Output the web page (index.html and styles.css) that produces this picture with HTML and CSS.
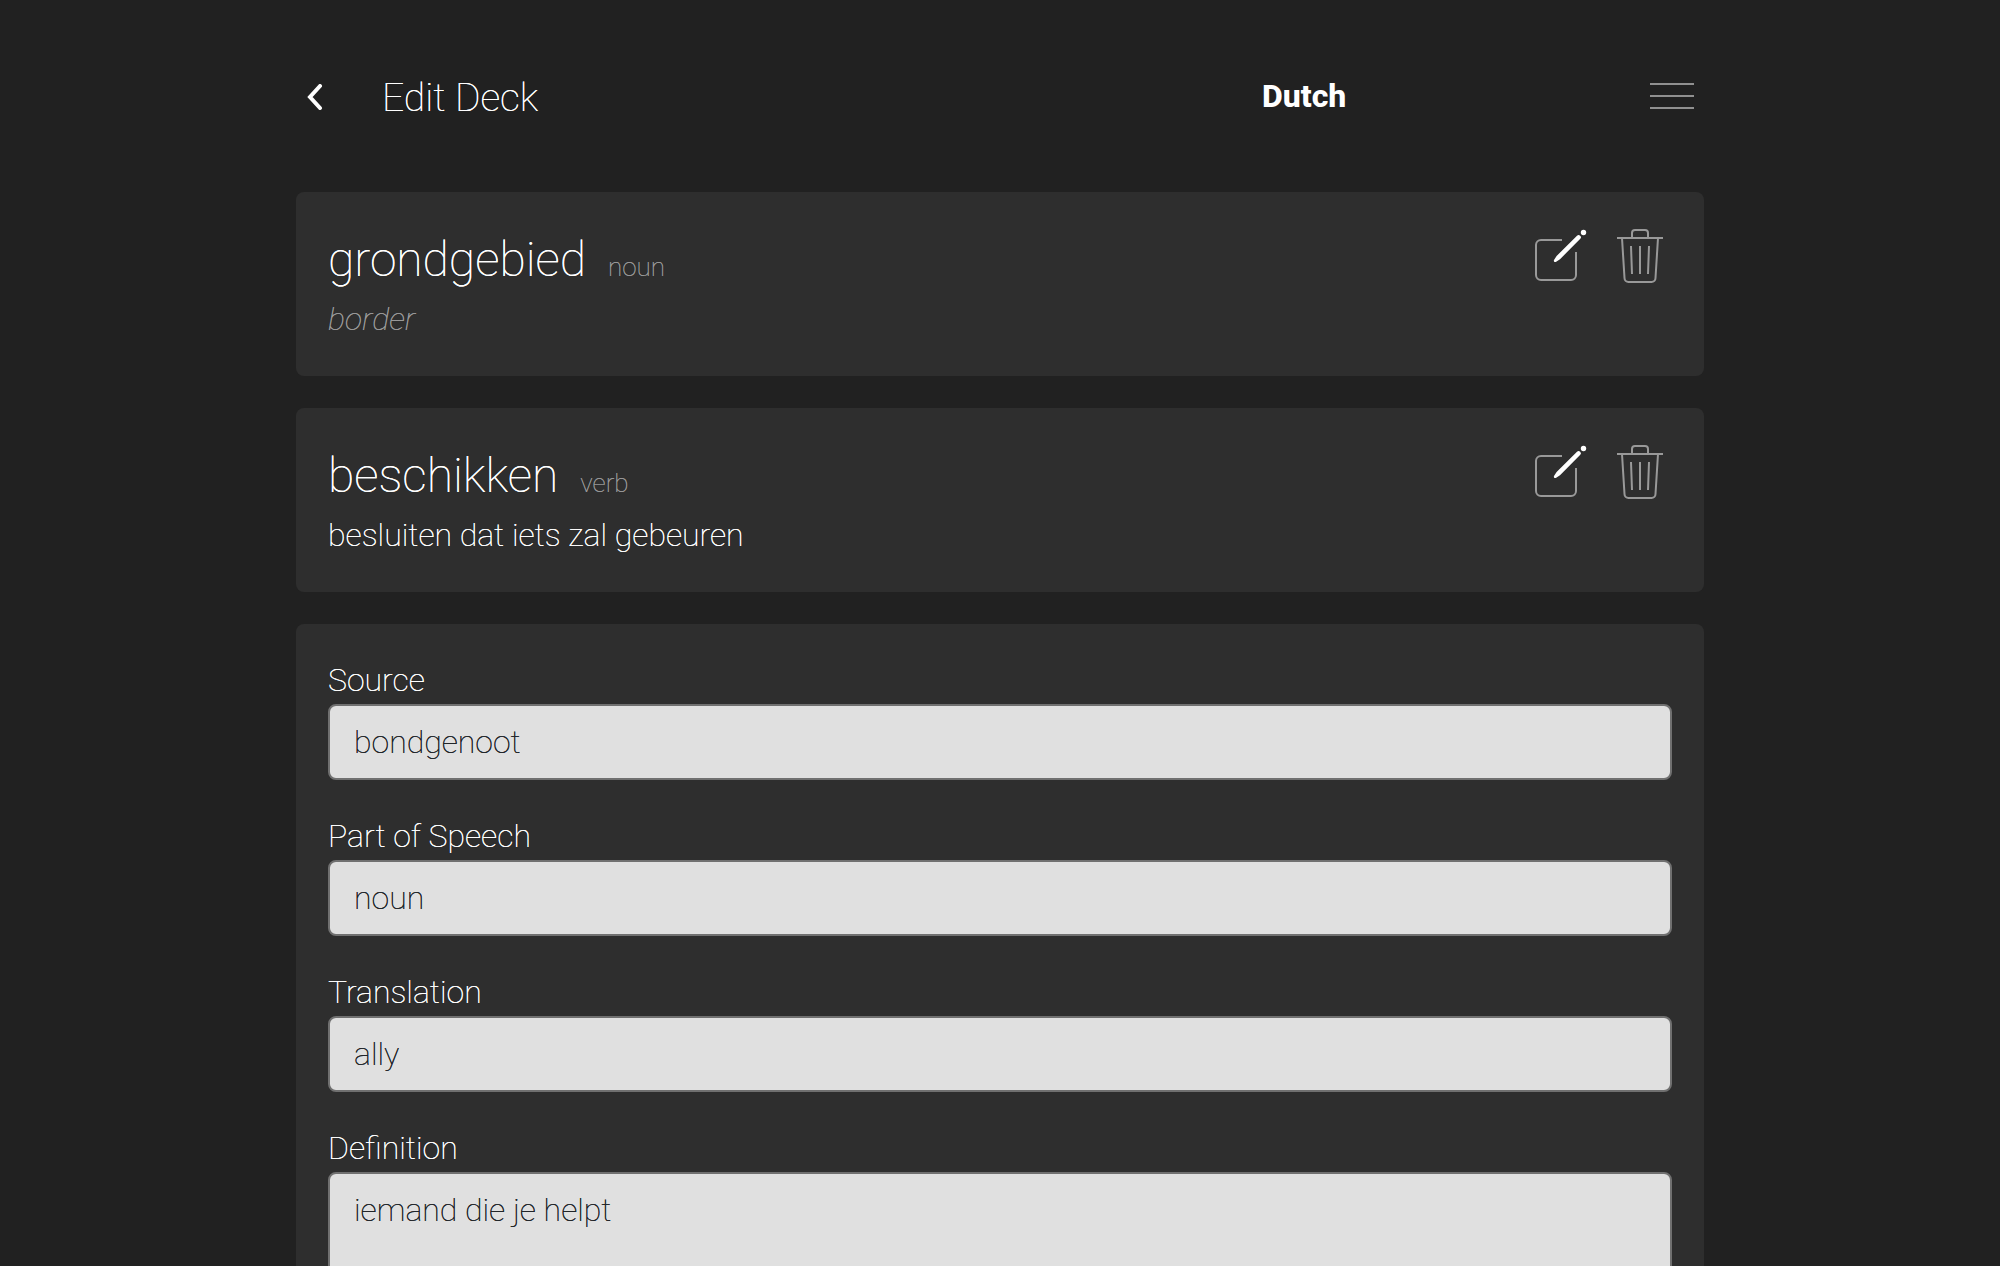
FILE: index.html
```html
<!DOCTYPE html>
<html lang="en">
<head>
<meta charset="utf-8">
<meta name="viewport" content="width=device-width, initial-scale=1">
<title>Edit Deck</title>
<link rel="stylesheet" href="styles.css">
</head>
<body>
<svg class="sprite" aria-hidden="true">
  <symbol id="icon-edit" viewBox="0 0 56 58">
    <path class="icon-line" d="M30 14H9a5 5 0 0 0-5 5v30a5 5 0 0 0 5 5h30a5 5 0 0 0 5-5V26"/>
    <path class="icon-solid" d="M45 9.800a2.200 2.200 0 0 1 3.300 3L28 33.200 24.200 35.800c-1.600.8-2.800-.4-2.200-1.800l2.600-4Z"/>
    <circle class="icon-solid" cx="51.500" cy="6.500" r="2.700"/>
  </symbol>
  <symbol id="icon-trash" viewBox="0 0 56 58">
    <path class="icon-line" d="M5 12h46M20 12V7a3 3 0 0 1 3-3h10a3 3 0 0 1 3 3v5M10 12l2.500 40a4 4 0 0 0 4 4h23a4 4 0 0 0 4-4L46 12M19 20l1 28M28 20v28M37 20l-1 28"/>
  </symbol>
</svg>
<div class="page">
  <header class="topbar">
    <a class="back" href="#" aria-label="Back">
      <svg viewBox="0 0 16 26" aria-hidden="true"><path d="M13 2 3 13l10 11"/></svg>
    </a>
    <h1 class="title">Edit Deck</h1>
    <strong class="deck">Dutch</strong>
    <button class="menu" type="button" aria-label="Menu"><span></span><span></span><span></span></button>
  </header>
  <main class="cards">
    <article class="card entry">
      <div class="entry-text">
        <h2 class="word">grondgebied <small class="speech">noun</small></h2>
        <p class="meaning translation">border</p>
      </div>
      <div class="actions">
        <button class="action" type="button" aria-label="Edit grondgebied"><svg aria-hidden="true"><use href="#icon-edit"/></svg></button>
        <button class="action" type="button" aria-label="Delete grondgebied"><svg aria-hidden="true"><use href="#icon-trash"/></svg></button>
      </div>
    </article>
    <article class="card entry">
      <div class="entry-text">
        <h2 class="word">beschikken <small class="speech">verb</small></h2>
        <p class="meaning">besluiten dat iets zal gebeuren</p>
      </div>
      <div class="actions">
        <button class="action" type="button" aria-label="Edit beschikken"><svg aria-hidden="true"><use href="#icon-edit"/></svg></button>
        <button class="action" type="button" aria-label="Delete beschikken"><svg aria-hidden="true"><use href="#icon-trash"/></svg></button>
      </div>
    </article>
    <form class="card form">
      <div class="field">
        <label for="source">Source</label>
        <input id="source" type="text" value="bondgenoot">
      </div>
      <div class="field">
        <label for="speech">Part of Speech</label>
        <input id="speech" type="text" value="noun">
      </div>
      <div class="field">
        <label for="translation">Translation</label>
        <input id="translation" type="text" value="ally">
      </div>
      <div class="field">
        <label for="definition">Definition</label>
        <textarea id="definition" rows="4">iemand die je helpt</textarea>
      </div>
    </form>
  </main>
</div>
</body>
</html>
```
FILE: styles.css
```css
* {
  box-sizing: border-box;
}

body {
  margin: 0;
  height: 100vh;
  overflow: hidden;
  background: #212121;
  color: #fff;
  font-family: Roboto, "Liberation Sans", sans-serif;
  font-size: 32px;
  font-weight: 140;
  line-height: 40px;
  /* keeps the thin strokes legible */
  text-shadow: 0 0 currentColor;
}

h1, h2, p {
  margin: 0;
  font-weight: inherit;
}

button {
  padding: 0;
  border: 0;
  background: none;
  color: inherit;
  cursor: pointer;
}

.sprite {
  position: absolute;
  width: 0;
  height: 0;
}

.page {
  max-width: 1472px;
  margin: 0 auto;
  padding: 0 32px;
}

.topbar {
  display: grid;
  grid-template-columns: 86px 5fr 6fr 44px;
  align-items: center;
  height: 192px;
  padding-right: 10px;
}

.back {
  display: flex;
  padding: 2px 0 0 11px;
  color: inherit;
}

.back svg {
  width: 16px;
  height: 26px;
  fill: none;
  stroke: currentColor;
  stroke-width: 4;
  stroke-linecap: round;
}

.title {
  padding-top: 4px;
  font-size: 39px;
  line-height: 48px;
}

.deck {
  font-weight: 800;
  text-align: center;
  text-shadow: none;
}

.menu {
  display: grid;
  gap: 10px;
}

.menu span {
  height: 2px;
  background: #909090;
}

.cards {
  display: grid;
  gap: 32px;
}

.card {
  padding: 32px;
  border-radius: 8px;
  background: #2e2e2e;
}

.entry {
  display: flex;
  justify-content: space-between;
  min-height: 184px;
}

.word {
  display: flex;
  align-items: baseline;
  gap: 22px;
  font-size: 48px;
  line-height: 72px;
}

.speech {
  color: #999;
  font-size: 26px;
}

.meaning {
  line-height: 32px;
}

.translation {
  color: #999;
  font-style: italic;
}

.actions {
  display: flex;
  gap: 24px;
  padding-right: 4px;
}

.action {
  width: 56px;
  height: 62px;
}

.action svg {
  display: block;
  width: 56px;
  height: 58px;
}

.icon-line {
  fill: none;
  stroke: #999;
  stroke-width: 2;
}

.icon-solid {
  fill: #fff;
}

.form {
  display: grid;
  gap: 32px;
}

.field {
  display: grid;
}

.field label {
  line-height: 48px;
}

.field input,
.field textarea {
  width: 100%;
  padding: 16px 24px;
  border: 2px solid #707070;
  border-radius: 8px;
  background: #e0e0e0;
  color: #212529;
  font: inherit;
  text-shadow: inherit;
  resize: none;
}
```
